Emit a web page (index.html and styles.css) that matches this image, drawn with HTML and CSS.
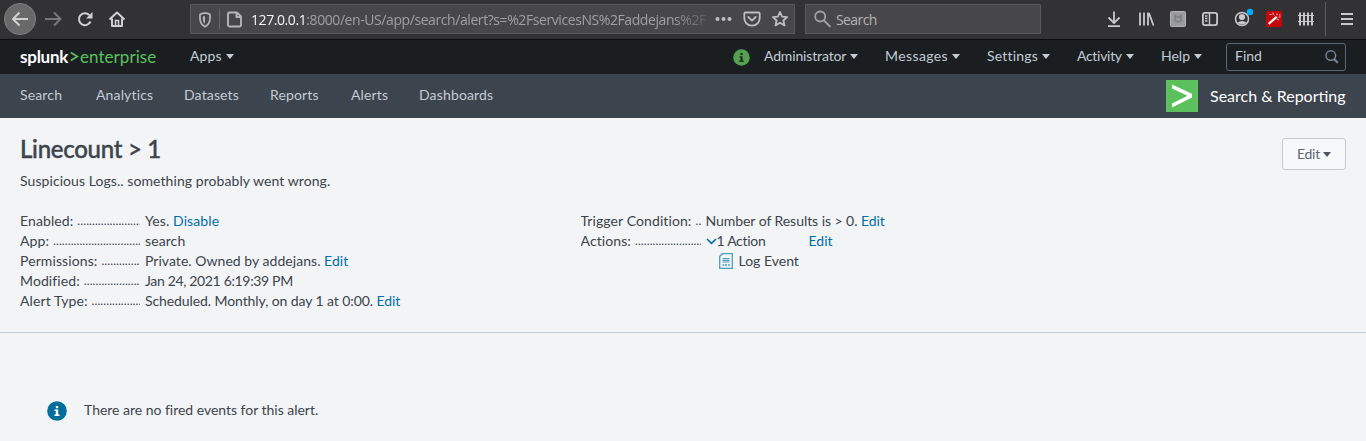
FILE: index.html
```html
<!DOCTYPE html>
<html lang="en">
<head>
<meta charset="utf-8">
<title>Linecount &gt; 1 | Splunk</title>
<link rel="stylesheet" href="styles.css">
</head>
<body>
<header class="browser">
  <svg class="nav-icons" width="190" height="39" viewBox="0 0 190 39" fill="none" stroke="#d0d0d1" stroke-width="2">
    <circle cx="20" cy="19" r="15.6" fill="#696969" stroke="#7c7c7d" stroke-width="1"/>
    <path d="M28 19H13M19.500 12.500L13 19l6.500 6.500" stroke-linejoin="round"/>
    <path d="M45 19h15M54 12.500L60.500 19 54 25.500" stroke="#77777a" stroke-linejoin="round"/>
    <path d="M90.500 21.500a6 6 0 1 1-1.200-6.500"/>
    <path d="M92.500 12v6.500H86z" fill="#d0d0d1" stroke="none"/>
    <path d="M109.500 19.500L117 12.500l7.500 7M112 18.500v7.500h10v-7.500" stroke-linejoin="round"/>
    <path d="M115.500 26v-5.500h3V26" stroke-width="1.600"/>
  </svg>
  <div class="url-bar">
    <svg class="url-icons" width="60" height="28" viewBox="0 0 60 28" fill="none" stroke="#b5b5b7">
      <path d="M14 8.200c-2 0-3.500.4-5 1.200v4c0 4 1.800 6.400 5 8.300 3.200-1.900 5-4.300 5-8.300v-4c-1.500-.8-3-1.200-5-1.200z" stroke-width="1.700"/>
      <path d="M14 11v7.800c-1.600-1.200-2.200-2.900-2.200-5.300v-2.100z" fill="#b5b5b7" stroke="none"/>
      <path d="M28.500 3.500v21" stroke="#66666a"/>
      <path d="M38.500 7.500h7.500l4 4v8.500a1.500 1.500 0 0 1-1.500 1.500h-10a1.500 1.500 0 0 1-1.500-1.500V9a1.500 1.500 0 0 1 1.500-1.500zM45.500 7.500v4.500H50" stroke-width="1.900" stroke-linejoin="round"/>
    </svg>
    <span class="url"><b>127.0.0.1</b>:8000/en-US/app/search/alert?s=%2FservicesNS%2Faddejans%2F</span>
    <svg width="84" height="28" viewBox="0 0 84 28" fill="none" stroke="#bebec0" stroke-width="1.800">
      <g fill="#bebec0" stroke="none"><circle cx="7.500" cy="14" r="2"/><circle cx="13.500" cy="14" r="2"/><circle cx="19.500" cy="14" r="2"/></g>
      <path d="M35.500 7.500h13a1.200 1.200 0 0 1 1.200 1.200V13c0 4.500-3.200 7.600-7.700 7.600S34.300 17.500 34.300 13V8.700a1.200 1.200 0 0 1 1.200-1.200zM38.300 12l3.700 3.600 3.700-3.600" stroke-linejoin="round" stroke-linecap="round"/>
      <path d="M70 7l2.100 4.600 5 .5-3.700 3.400 1.100 4.900-4.500-2.600-4.500 2.600 1.100-4.900-3.700-3.400 5-.5z" stroke-linejoin="round"/>
    </svg>
  </div>
  <div class="web-search">
    <svg width="20" height="20" viewBox="0 0 20 20" fill="none" stroke="#a2a2a4" stroke-width="1.800"><circle cx="7.200" cy="7.500" r="5"/><path d="M11 11.500l6.500 6.500"/></svg>
    <span>Search</span>
  </div>
  <svg class="tools" width="266" height="39" viewBox="0 0 266 39" fill="none" stroke="#c8c8ca" stroke-width="1.800">
    <path d="M14 11.500v11M8.500 17.500l5.500 5.500 5.500-5.500M8 26.200h12" stroke-linejoin="round"/>
    <path d="M40 12.500v13M44 12.500v13M48 12.500v13M48.900 13L53.500 25.500"/>
    <rect x="70.500" y="11.500" width="15" height="15" rx="1" fill="#9a9b9d" stroke="#b4b4b6" stroke-width="1"/>
    <path d="M75 15.500v5l3 1.700 3-1.700v-5l-3 2z" stroke="#7f8083" stroke-width="1.600"/>
    <rect x="102.900" y="12.900" width="14.200" height="12.200" rx="2"/>
    <path d="M109.500 13v12M105 16h2.500M105 18.500h2.500M105 21h2.500" stroke-width="1.400"/>
    <circle cx="142" cy="19" r="6.500" stroke-width="1.500"/>
    <circle cx="142" cy="17" r="3.100" fill="#c8c8ca" stroke="none"/><path d="M137.300 22.500q4.700-3 9.400 0-4.700 4-9.400 0z" fill="#c8c8ca" stroke="none"/>
    <circle cx="150" cy="12" r="3.200" fill="#00aeff" stroke="none"/>
    <rect x="166" y="11" width="16" height="16" rx="1" fill="#c60707" stroke="none"/>
    <path d="M168.700 23.800l8-7" stroke="#fff" stroke-width="2.200"/><path d="M169.500 14.500h2M173 12.500v2M174.500 15.500l-1-1M177 13.500v1.800M179 15h1.500M177 19l2 1M178.500 17h2" stroke="#f7c0c0" stroke-width="1"/>
    <path d="M200 12.500v13M204 12.500v13M208 12.500v13M212 12.500v13" stroke-width="2"/><path d="M198 15.500h16M198 21.500h16" stroke-width="1.200"/>
    <path d="M225.500 2v34" stroke="#5c5c60" stroke-width="1"/>
    <path d="M241 14h12M241 19h12M241 24h12" stroke-width="2"/>
  </svg>
</header>

<nav class="splunk-bar">
  <div class="logo"><strong>splunk</strong><svg width="9" height="12" viewBox="0 0 9 12" fill="none" stroke="#5cc05c" stroke-width="1.700"><path d="M.8 1.500L7.300 5.500.8 9.500"/></svg><span>enterprise</span></div>
  <a class="menu apps">Apps<i class="caret"></i></a>
  <svg class="status" width="17" height="17" viewBox="0 0 17 17"><circle cx="8.500" cy="8.500" r="8.300" fill="#53a051"/><path d="M7.500 4h2v2h-2zM6.500 7.200h3v4.300h1.200v1.200H6.300v-1.200h1.300v-3H6.500z" fill="#1a1e21"/></svg>
  <a class="menu admin">Administrator<i class="caret"></i></a>
  <a class="menu messages">Messages<i class="caret"></i></a>
  <a class="menu settings">Settings<i class="caret"></i></a>
  <a class="menu activity">Activity<i class="caret"></i></a>
  <a class="menu help">Help<i class="caret"></i></a>
  <div class="find"><span>Find</span><svg width="14" height="14" viewBox="0 0 14 14" fill="none" stroke="#7b8799" stroke-width="1.400"><circle cx="5.800" cy="5.600" r="4.800"/><path d="M9 9l3.800 3.800" stroke-width="2"/></svg></div>
</nav>

<nav class="app-bar">
  <a class="t-search">Search</a><a class="t-analytics">Analytics</a><a class="t-datasets">Datasets</a><a class="t-reports">Reports</a><a class="t-alerts">Alerts</a><a class="t-dash">Dashboards</a>
  <div class="app-name">
    <svg width="32" height="32" viewBox="0 0 32 32"><path fill="#5cc05c" d="M0 0h32v32H0z"/><path fill="#fff" d="M6 4.500l20 9.300v3.600L6 27.500v-4l15.500-7.800L6 8.600z"/></svg>
    <span>Search &amp; Reporting</span>
  </div>
</nav>

<main>
  <section class="heading">
    <div><h1>Linecount &gt; 1</h1><p class="description">Suspicious Logs.. something probably went wrong.</p></div>
    <button class="edit">Edit<i class="caret"></i></button>
  </section>
  <section class="details">
    <dl class="left">
      <dt><span>Enabled:</span></dt><dd class="loose">Yes. <a>Disable</a></dd>
      <dt><span>App:</span></dt><dd class="loose">search</dd>
      <dt><span>Permissions:</span></dt><dd class="owner">Private. Owned by addejans. <a>Edit</a></dd>
      <dt><span>Modified:</span></dt><dd class="date">Jan 24, 2021 6:19:39 PM</dd>
      <dt><span>Alert Type:</span></dt><dd class="schedule">Scheduled. Monthly, on day 1 at 0:00. <a>Edit</a></dd>
    </dl>
    <dl class="right">
      <dt><span>Trigger Condition:</span></dt><dd class="condition">Number of Results is &gt; 0. <a>Edit</a></dd>
      <dt><span>Actions:</span></dt>
      <dd class="actions"><svg width="11" height="20" viewBox="0 0 11 20" fill="none" stroke="#006eaa" stroke-width="1.600"><path d="M1 8l4.500 4.300L10 8"/></svg><span class="count">1 Action</span><a>Edit</a></dd>
      <dd class="event"><svg width="14" height="16" viewBox="0 0 14 16" fill="none" stroke="#4c9cc4"><path d="M.7 3.500L3.500.7h9.800v14.600H.7z" stroke-width="1.300"/><path d="M3.500 5.500h7M3.500 7.300h7M3.500 9h7" stroke-width="1.200"/><path d="M3.500 12h1.800M6 12h2M9 12h1.800" stroke-width="1.300"/></svg><span>Log Event</span></dd>
    </dl>
  </section>
  <section class="empty">
    <svg width="20" height="20" viewBox="0 0 20 20"><circle cx="10" cy="10" r="9.800" fill="#006d9c"/><path d="M8.800 5h2.400v2.200H8.800zM7.500 8.500h3.700v5h1.300V15H7.400v-1.500h1.400V10H7.500z" fill="#fff"/></svg>
    <span>There are no fired events for this alert.</span>
  </section>
</main>
</body>
</html>
```
FILE: styles.css
```css
* { box-sizing: border-box; }
body { margin: 0; background: #f2f4f5; color: #3c444d; font: 14px/20px Lato, "Open Sans", sans-serif; }
svg { display: block; flex: none; }
a { color: #006eaa; }

.browser { display: flex; height: 40px; background: #323234; border-bottom: 1px solid #0c0c0d; font-family: "Open Sans", sans-serif; }
.url-bar { display: flex; width: 605px; height: 30px; margin-top: 4px; border: 1px solid #5b5b5e; background: #474749; border-radius: 1px; }
.url { width: 459px; overflow: hidden; white-space: nowrap; font-size: 14px; letter-spacing: -.42px; line-height: 29px; color: #a0a0a2; -webkit-mask-image: linear-gradient(90deg, #000 92%, transparent 101%); mask-image: linear-gradient(90deg, #000 92%, transparent 101%); }
.url b { font-weight: 400; color: #f4f4f5; }
.web-search { display: flex; align-items: center; gap: 3px; width: 236px; height: 30px; margin: 4px 0 0 10px; padding-left: 7px; border: 1px solid #5b5b5e; border-radius: 1px; background: #474749; color: #b4b4b6; }
.web-search span { letter-spacing: -.6px; padding-top: 2px; }
.tools { margin-left: auto; }

.splunk-bar { display: flex; align-items: center; height: 34px; padding-right: 20px; background: #1a1e21; }
.logo { display: flex; align-items: center; width: 170px; margin-left: 20px; padding-bottom: 1px; font-size: 17px; line-height: 31px; color: #5cc05c; }
.logo strong { color: #fff; font-weight: 700; letter-spacing: -.25px; width: 50px; }
.logo svg { margin-top: 1px; }
.logo span { margin-left: 1px; letter-spacing: .05px; }
.menu { display: flex; align-items: center; padding-bottom: 2px; color: #c3cbd4; white-space: nowrap; }
.caret { flex: none; width: 0; height: 0; margin-left: 4px; border: 4px solid transparent; border-top: 5px solid currentColor; border-bottom: 0; }
.apps { width: 543px; letter-spacing: .1px; }
.status { margin-right: 14px; }
.admin { width: 121px; letter-spacing: -.15px; }
.messages { width: 102px; letter-spacing: .4px; }
.settings { width: 90px; letter-spacing: .2px; }
.activity { width: 84px; letter-spacing: -.3px; }
.help { width: 65px; }
.find { display: flex; align-items: center; justify-content: space-between; width: 120px; height: 28px; margin-left: auto; padding: 0 6px 0 8px; border: 1px solid #5c6773; border-radius: 3px; color: #c3cbd4; }
.find span { padding-bottom: 2px; }

.app-bar { display: flex; align-items: center; height: 44px; padding: 0 20px; background: #3c444d; }
.app-bar a { padding-bottom: 2px; color: #c3cbd4; letter-spacing: .15px; }
.t-search { width: 76px; }
.t-analytics { width: 88px; }
.t-datasets { width: 86px; }
.t-reports { width: 81px; }
.t-alerts { width: 68px; }
.app-name { display: flex; align-items: center; gap: 12px; width: 180px; margin-left: auto; color: #fff; font-size: 16px; white-space: nowrap; }
.app-name span { padding-bottom: 1px; }

.heading { display: flex; justify-content: space-between; height: 93px; padding: 17px 20px 0; }
h1 { margin: 0; font-size: 24px; line-height: 28px; font-weight: 500; letter-spacing: -.28px; -webkit-text-stroke: .4px; }
.description { margin: 8px 0 0; letter-spacing: .07px; }
.edit { display: flex; align-items: center; justify-content: center; width: 64px; height: 32px; margin-top: 3px; padding: 0; border: 1px solid #c3cbd4; border-radius: 3px; background: #f7f8fa; color: #5c6773; font: inherit; letter-spacing: -.2px; }
.edit .caret { margin-left: 3px; color: #4b5561; }
.details { display: flex; height: 122px; padding: 0 20px; border-bottom: 1px solid #c3cbd4; }
dl { display: grid; grid-template-columns: 120px 1fr; grid-auto-rows: 20px; column-gap: 5px; margin: 0; width: 560.5px; align-content: start; white-space: nowrap; }
dt { display: flex; overflow: hidden; letter-spacing: .1px; }
dt::after { content: "................................................"; flex: 1; overflow: hidden; margin-left: 4px; font-size: 12px; letter-spacing: .1px; }
dd { margin: 0; }
.loose { letter-spacing: .1px; }
.owner { letter-spacing: .04px; }
.date { letter-spacing: -.34px; }
.schedule { letter-spacing: -.09px; }
.condition { letter-spacing: -.05px; }
.actions { display: flex; letter-spacing: -.3px; }
.actions a { letter-spacing: 0; }
.count { width: 92px; }
.event { grid-column: 2; display: flex; align-items: center; gap: 6px; padding-left: 13px; }
.empty { display: flex; align-items: center; gap: 17px; height: 108px; padding: 48px 0 0 47px; }
.empty span { padding-bottom: 2px; letter-spacing: -.02px; }
```
